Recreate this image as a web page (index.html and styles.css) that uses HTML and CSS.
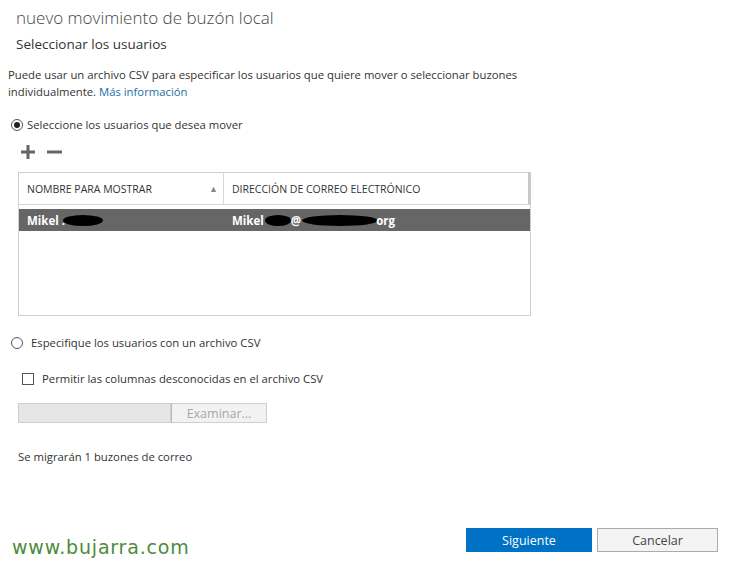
FILE: index.html
```html
<!DOCTYPE html>
<html lang="es">
<head>
<meta charset="utf-8">
<title>nuevo movimiento de buzón local</title>
<link rel="stylesheet" href="styles.css">
</head>
<body>
<div class="page">
  <h1 class="title">nuevo movimiento de buzón local</h1>
  <h2 class="subtitle">Seleccionar los usuarios</h2>
  <p class="intro"><span>Puede usar un archivo CSV para especificar los usuarios que quiere mover o seleccionar buzones</span><br><span>individualmente.</span> <a class="link" href="#">Más información</a></p>

  <label class="option option-first">
    <span class="radio checked"></span>
    <span>Seleccione los usuarios que desea mover</span>
  </label>

  <div class="toolbar">
    <svg class="tool" width="16" height="16" viewBox="0 0 16 16"><path d="M8 1v14M1 8h14" stroke="#666" stroke-width="3"/></svg>
    <svg class="tool" width="16" height="16" viewBox="0 0 16 16"><path d="M1 8h15" stroke="#666" stroke-width="3"/></svg>
  </div>

  <div class="grid">
    <div class="grid-head">
      <div class="col col-name">NOMBRE PARA MOSTRAR <span class="sort">▲</span></div>
      <div class="col col-mail">DIRECCIÓN DE CORREO ELECTRÓNICO</div>
    </div>
    <div class="grid-body">
      <div class="row selected">
        <div class="cell cell-name">Mikel .<span class="blot b1"></span></div>
        <div class="cell cell-mail">Mikel<span class="blot b2"></span>@<span class="blot b3"></span>org</div>
      </div>
    </div>
  </div>

  <label class="option option-csv">
    <span class="radio"></span>
    <span>Especifique los usuarios con un archivo CSV</span>
  </label>

  <label class="check-row">
    <span class="checkbox"></span>
    <span>Permitir las columnas desconocidas en el archivo CSV</span>
  </label>

  <div class="file-row">
    <div class="file-input"></div>
    <div class="file-btn">Examinar...</div>
  </div>

  <p class="summary">Se migrarán 1 buzones de correo</p>

  <div class="footer">
    <div class="brand">www.bujarra.com</div>
    <div class="actions">
      <button class="btn btn-primary">Siguiente</button>
      <button class="btn btn-secondary">Cancelar</button>
    </div>
  </div>
</div>
</body>
</html>
```

FILE: styles.css
```css
* { box-sizing: border-box; }
html, body { margin: 0; padding: 0; background: #fff; }
body {
  font-family: "Open Sans", "Noto Sans", sans-serif;
  color: #333;
}
.page {
  width: 733px;
  height: 569px;
  display: flex;
  flex-direction: column;
}
.title {
  margin: 6px 0 0 16px;
  font-size: 17px;
  line-height: 24px;
  font-weight: 300;
  color: #444;
}
.subtitle {
  margin: 4px 0 0 16px;
  font-size: 13.5px;
  line-height: 20px;
  font-weight: 400;
  color: #333;
}
.intro {
  margin: 12px 0 0 8px;
  width: 540px;
  font-size: 11.3px;
  line-height: 17px;
  color: #333;
}
.link { color: #1c6ea4; text-decoration: none; }

.option {
  display: flex;
  align-items: center;
  font-size: 11.3px;
  line-height: 16px;
}
.option-first { margin: 17px 0 0 11px; gap: 4px; }
.radio {
  width: 12px; height: 12px;
  border: 1px solid #555;
  border-radius: 50%;
  display: inline-flex;
  align-items: center;
  justify-content: center;
  flex: none;
}
.radio.checked::after {
  content: "";
  width: 6px; height: 6px;
  border-radius: 50%;
  background: #222;
}
.toolbar {
  display: flex;
  gap: 10px;
  margin: 11px 0 0 20px;
}
.grid {
  margin: 12px 0 0 18px;
  width: 513px;
  height: 144px;
  border: 1px solid #cfcfcf;
  display: flex;
  flex-direction: column;
}
.grid-head {
  display: flex;
  height: 32px;
  border-bottom: 1px solid #d8d8d8;
  border-right: 2px solid #c8c8c8;
  font-size: 10.5px;
  color: #333;
}
.col { display: flex; align-items: center; padding-left: 8px; }
.col-name { width: 205px; border-right: 1px solid #d8d8d8; justify-content: space-between; padding-right: 5px; }
.col-mail { flex: 1; }
.sort { font-size: 9px; color: #888; }
.grid-body { padding-top: 4px; }
.row { display: flex; height: 22px; }
.row.selected { background: #666; color: #fff; font-weight: 700; font-size: 11.5px; }
.cell { display: flex; align-items: center; padding-left: 8px; }
.cell-name { width: 205px; }
.cell-mail { flex: 1; }
.blot {
  display: inline-block;
  background: #000;
  border-radius: 50%;
  height: 11px;
}
.b1 { width: 40px; margin-left: -2px; }
.b2 { width: 26px; margin: 0 0 0 1px; }
.b3 { width: 76px; margin: 1px -2px 0 1px; }

.option-csv { margin: 19px 0 0 11px; gap: 8px; }
.check-row {
  display: flex;
  align-items: center;
  gap: 8px;
  margin: 20px 0 0 22px;
  font-size: 11.3px;
  line-height: 16px;
}
.checkbox {
  width: 12px; height: 12px;
  border: 1px solid #555;
  flex: none;
}
.file-row {
  display: flex;
  margin: 16px 0 0 18px;
  height: 20px;
}
.file-input {
  width: 153px;
  background: #e6e6e6;
  border: 1px solid #cfcfcf;
}
.file-btn {
  width: 96px;
  background: #f2f2f2;
  border: 1px solid #cfcfcf;
  border-left: 1px solid #bbb;
  color: #a8a8a8;
  font-size: 12.5px;
  display: flex;
  align-items: center;
  justify-content: center;
}
.summary {
  margin: 26px 0 0 18px;
  font-size: 11.3px;
  line-height: 16px;
  color: #333;
}
.footer {
  margin-top: auto;
  margin-bottom: 17px;
  display: flex;
  align-items: flex-end;
  justify-content: space-between;
  padding: 0 15px 0 12px;
}
.brand {
  font-family: "DejaVu Sans", sans-serif;
  font-size: 19px;
  color: #4c8c3a;
  line-height: 20px;
  letter-spacing: 0.8px;
  margin-bottom: -5px;
}
.actions { display: flex; gap: 5px; }
.btn {
  height: 24px;
  font-family: "Open Sans", "Noto Sans", sans-serif;
  font-size: 12.5px;
  border: 1px solid transparent;
  padding: 0;
}
.btn-primary { width: 126px; background: #0072c6; color: #fff; border-color: #0072c6; }
.btn-secondary { width: 121px; background: #f4f4f4; color: #444; border-color: #ababab; }
```
